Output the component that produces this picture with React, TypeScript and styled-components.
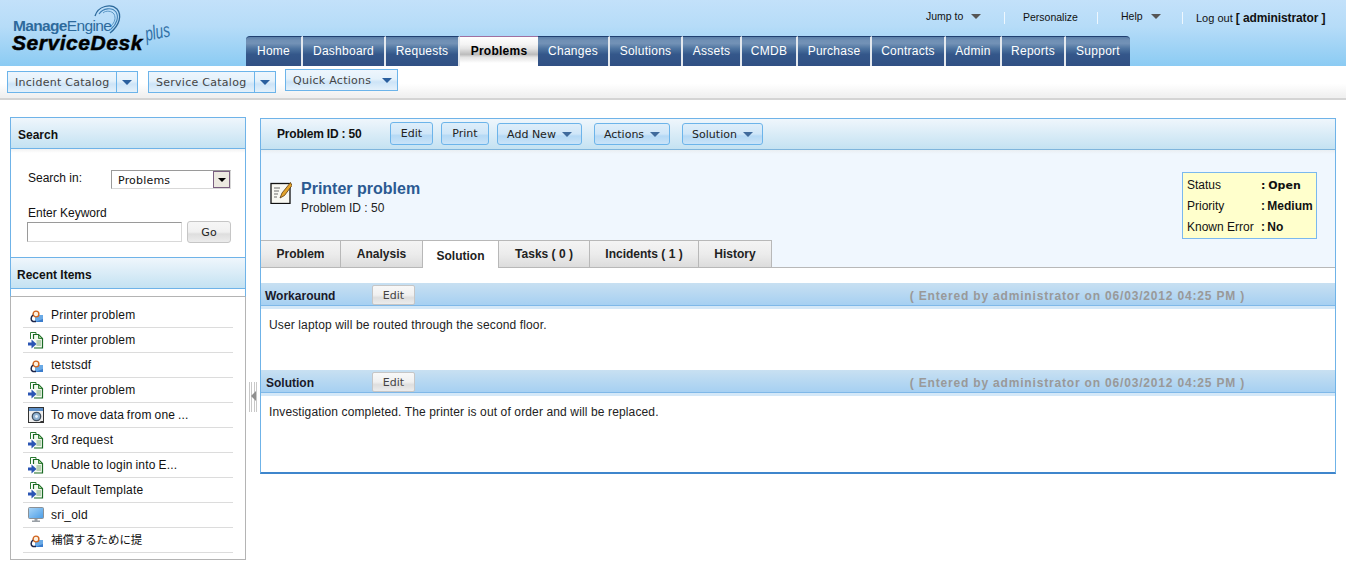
import React from "react";
import styled, { createGlobalStyle } from "styled-components";

const Global = createGlobalStyle`
  html, body { margin: 0; padding: 0; background: #fff; }
  body { font-family: "Liberation Sans", Arial, "Noto Sans CJK JP", sans-serif; font-size: 12px; color: #111; }
  * { box-sizing: border-box; }
`;

const Page = styled.div`
  width: 1346px;
  height: 562px;
  overflow: hidden;
`;

const Header = styled.header`
  height: 66px;
  display: flex;
  background: linear-gradient(#c3e1fa, #b6dcf8 40%, #8bcbf3);
`;

const Logo = styled.div`
  width: 246px;
  flex: none;
  position: relative;
`;

const LogoArc = styled.svg`
  position: absolute;
  left: 90px;
  top: 3px;
`;

const LogoTop = styled.div`
  position: absolute;
  left: 13px;
  top: 18px;
  font-size: 15.5px;
  line-height: 15px;
  letter-spacing: -0.65px;
  color: #2d6a9c;
  font-weight: 700;
  span { font-weight: 400; color: #2d6a9c; }
`;

const LogoMain = styled.div`
  position: absolute;
  left: 12px;
  top: 33px;
  font-size: 21px;
  line-height: 20px;
  font-weight: 700;
  font-style: italic;
  color: #000;
  letter-spacing: 0.55px;
  -webkit-text-stroke: 0.5px #000;
`;

const LogoPlus = styled.div`
  position: absolute;
  left: 147px;
  top: 24px;
  font-style: italic;
  font-size: 20px;
  line-height: 20px;
  color: #2f6fa5;
  transform-origin: left bottom;
  transform: rotate(-11deg) scaleX(0.68);
`;

const HeaderRight = styled.div`
  flex: 1;
  display: flex;
  flex-direction: column;
`;

const TopLinks = styled.div`
  height: 36px;
  padding-top: 9px;
  display: flex;
  align-items: flex-start;
  font-size: 10.5px;
  line-height: 14px;
`;

const TopLink = styled.div<{ $left: number; $w: number; $top?: number }>`
  margin-left: ${(p) => p.$left}px;
  margin-top: ${(p) => p.$top ?? 0}px;
  width: ${(p) => p.$w}px;
  display: flex;
  align-items: center;
  white-space: nowrap;
`;

const TopSep = styled.div<{ $left: number }>`
  margin-left: ${(p) => p.$left}px;
  width: 1px;
  height: 12px;
  margin-top: 3px;
  background: #eef7fe;
`;

const GreyCaret = styled.span`
  margin-left: 8px;
  width: 0;
  height: 0;
  border-left: 5px solid transparent;
  border-right: 5px solid transparent;
  border-top: 5px solid #555;
`;

const Logout = styled.div`
  margin-left: 13px;
  margin-top: 2px;
  font-size: 11px;
  white-space: nowrap;
  b { font-size: 12px; letter-spacing: -0.1px; }
`;

const Nav = styled.nav`
  height: 30px;
  display: flex;
`;

const NavTab = styled.div<{ $w: number; $active?: boolean; $first?: boolean; $last?: boolean }>`
  width: ${(p) => p.$w}px;
  height: 30px;
  flex: none;
  display: flex;
  align-items: center;
  justify-content: center;
  padding-bottom: 2px;
  font-size: 12px;
  letter-spacing: 0.25px;
  color: ${(p) => (p.$active ? "#000" : "#fff")};
  font-weight: ${(p) => (p.$active ? 700 : 400)};
  border-right: ${(p) => (p.$active || p.$last ? "0" : "2px solid #e3e8ee")};
  border-top: 1px solid ${(p) => (p.$active ? "#a070a0" : "#1f3f70")};
  border-radius: ${(p) => (p.$first ? "4px 0 0 0" : p.$last ? "0 4px 0 0" : "0")};
  background: ${(p) =>
    p.$active
      ? "linear-gradient(#fff 0, #f4f4f4 25%, #e4e4e4 40%, #bcbcbc 60%, #e4e4e4 70%, #fff 90%)"
      : "linear-gradient(#5b7fa8 0, #6f8fb4 12%, #7392b6 22%, #4e74a0 40%, #34578a 60%, #315084 100%)"};
`;

const SubBar = styled.div`
  height: 34px;
  display: flex;
  padding-left: 7px;
  background: linear-gradient(#fff 0, #fff 55%, #f0f0f0 95%);
  border-bottom: 2px solid #d4d4d4;
`;

const SplitButton = styled.div<{ $top: number; $ml: number; $main: number }>`
  margin-top: ${(p) => p.$top}px;
  margin-left: ${(p) => p.$ml}px;
  height: 22px;
  display: flex;
  border: 1px solid #6cb4ea;
  background: linear-gradient(#eef6fd, #e4f1fb 45%, #cde4f7 60%, #e4f1fb);
  font-family: "DejaVu Sans", Verdana, sans-serif;
  font-size: 11px;
  letter-spacing: 0.27px;
  color: #444;
  span:first-child {
    width: ${(p) => p.$main}px;
    padding-left: 7px;
    line-height: 22px;
    white-space: nowrap;
  }
`;

const SplitArrow = styled.span<{ $plain?: boolean }>`
  width: 21px;
  display: flex;
  align-items: center;
  justify-content: center;
  border-left: ${(p) => (p.$plain ? "0" : "1px solid #6cb4ea")};
  &::before {
    content: "";
    width: 0;
    height: 0;
    border-left: 5px solid transparent;
    border-right: 5px solid transparent;
    border-top: 5px solid #2a5f9e;
  }
`;

const Content = styled.div`
  display: flex;
  padding: 17px 0 0 10px;
`;

const Sidebar = styled.aside`
  width: 236px;
  height: 443px;
  flex: none;
  display: flex;
  flex-direction: column;
  border: 1px solid #b4b4b4;
  border-top: 0;
`;

const BlueSection = styled.div`
  margin: 0 -1px;
  border: 1px solid #6fb3e8;
  border-bottom: 0;
  flex: none;
`;

const SideHead = styled.div<{ $pl: number }>`
  height: 31px;
  padding: 3px 0 0 ${(p) => p.$pl}px;
  display: flex;
  align-items: center;
  font-weight: 700;
  font-size: 12px;
  background: linear-gradient(#eff6fc, #c4e2f2);
  border-bottom: 1px solid #6fb3e8;
`;

const SearchBody = styled.div`
  height: 109px;
  padding: 20px 14px 0 16px;
  background: linear-gradient(#f2f2f2 0, #fff 4px);
  border-bottom: 1px solid #6fb3e8;
`;

const SearchInRow = styled.div`
  display: flex;
  align-items: flex-start;
  height: 37px;
`;

const SearchLabel = styled.div`
  width: 84px;
  padding: 1px 0 0 1px;
  line-height: 16px;
`;

const FakeSelect = styled.div`
  width: 120px;
  height: 19px;
  margin-top: 1px;
  display: flex;
  align-items: center;
  justify-content: space-between;
  padding-left: 6px;
  border: 1px solid;
  border-color: #9a9a9a #d8d8d8 #d8d8d8 #9a9a9a;
  background: #fff;
  font-family: "DejaVu Sans", Verdana, sans-serif;
  font-size: 11px;
  letter-spacing: 0.2px;
  line-height: 19px;
`;

const SelectName = styled.span`
  padding-top: 1px;
`;

const SelectBtn = styled.div`
  width: 17px;
  height: 17px;
  display: flex;
  align-items: center;
  justify-content: center;
  background: #ece9e0;
  border: 1px solid #7a5f80;
  &::before {
    content: "";
    border-left: 4px solid transparent;
    border-right: 4px solid transparent;
    border-top: 4px solid #000;
  }
`;

const KeywordLabel = styled.div`
  line-height: 15px;
  padding-left: 1px;
`;

const KeywordRow = styled.div`
  display: flex;
  gap: 5px;
`;

const KeywordInput = styled.div`
  width: 155px;
  height: 20px;
  margin-top: 1px;
  background: #fff;
  border: 1px solid;
  border-color: #9a9a9a #d8d8d8 #d8d8d8 #9a9a9a;
`;

const GoButton = styled.div`
  width: 44px;
  height: 22px;
  display: flex;
  align-items: center;
  justify-content: center;
  border: 1px solid #c6c6c6;
  border-radius: 3px;
  background: linear-gradient(#f6f6f6, #f0f0f0 50%, #dedede 60%, #ececec);
  font-family: "DejaVu Sans", Verdana, sans-serif;
  font-size: 11px;
  color: #222;
`;

const RecentGap = styled.div`
  height: 8px;
  margin: 0 -1px;
  border-left: 1px solid #6fb3e8;
  border-right: 1px solid #6fb3e8;
  border-bottom: 1px solid #b4b4b4;
  flex: none;
`;

const RecentList = styled.ul`
  list-style: none;
  margin: 6px 12px 0 12px;
  padding: 0;
`;

const RecentRow = styled.li`
  height: 25px;
  display: flex;
  align-items: center;
  border-bottom: 1px solid #dcdcdc;
  padding-left: 5px;
  font-size: 12px;
  letter-spacing: 0.2px;
  word-spacing: -0.7px;
  white-space: nowrap;
  svg { flex: none; margin-right: 7px; }
`;

const CjkLabel = styled.span`
  font-family: "Noto Sans CJK JP", sans-serif;
  font-size: 11.5px;
  letter-spacing: -0.1px;
  margin-top: -2px;
`;

const Splitter = styled.div`
  width: 14px;
  height: 443px;
  flex: none;
  display: flex;
  align-items: flex-start;
  justify-content: center;
`;

const SplitterGrip = styled.svg`
  margin-top: 265px;
`;

const Main = styled.main`
  width: 1076px;
  height: 356px;
  flex: none;
  margin-top: 1px;
  display: flex;
  flex-direction: column;
  border: 1px solid #6fb3e8;
  border-bottom: 2px solid #3f86cc;
`;

const Toolbar = styled.div`
  height: 31px;
  flex: none;
  display: flex;
  align-items: flex-start;
  background: linear-gradient(#eff6fc, #c4e2f2);
  border-bottom: 1px solid #7fb5dc;
`;

const ToolTitle = styled.div`
  width: 129px;
  padding: 8px 0 0 16px;
  font-weight: 700;
  font-size: 12px;
  letter-spacing: -0.2px;
  line-height: 14px;
  white-space: nowrap;
`;

const ToolButton = styled.div<{ $w: number; $ml: number; $top: number; $h: number }>`
  width: ${(p) => p.$w}px;
  height: ${(p) => p.$h}px;
  margin-left: ${(p) => p.$ml}px;
  margin-top: ${(p) => p.$top}px;
  flex: none;
  display: flex;
  align-items: center;
  justify-content: center;
  gap: 6px;
  border: 1px solid #6cb4ea;
  border-radius: 3px;
  background: linear-gradient(#deeefa, #cfe6f8 50%, #b5d9f5 60%, #c9e3f8);
  font-family: "DejaVu Sans", Verdana, sans-serif;
  font-size: 11px;
  color: #222;
`;

const BlueCaret = styled.span`
  width: 0;
  height: 0;
  border-left: 5px solid transparent;
  border-right: 5px solid transparent;
  border-top: 5px solid #3f6a9c;
`;

const InfoArea = styled.div`
  height: 118px;
  flex: none;
  background: linear-gradient(#e9eef2 0, #f0f7fe 4px);
  border-bottom: 1px solid #b8b8b8;
  display: flex;
  flex-direction: column;
`;

const InfoTop = styled.div`
  height: 90px;
  display: flex;
  justify-content: space-between;
`;

const TitleBlock = styled.div`
  display: flex;
  padding: 30px 0 0 9px;
  svg { flex: none; margin-right: 9px; margin-top: 2px; }
`;

const TitleText = styled.div`
  font-size: 16px;
  font-weight: 700;
  line-height: 18px;
  color: #2b5a92;
`;

const SubText = styled.div`
  font-size: 12px;
  line-height: 14px;
  margin-top: 3px;
  color: #222;
`;

const StatusBox = styled.div`
  width: 135px;
  height: 67px;
  margin: 22px 18px 0 0;
  padding: 2px 0 0 4px;
  background: #ffffcc;
  border: 1px solid #7ab8ee;
`;

const StatusRow = styled.div`
  display: flex;
  height: 21px;
  line-height: 21px;
  font-size: 12px;
  white-space: nowrap;
`;

const StatusKey = styled.div`
  width: 74px;
`;

const StatusValue = styled.div<{ $wide?: boolean }>`
  font-weight: 700;
  word-spacing: -1px;
  font-family: ${(p) => (p.$wide ? '"DejaVu Sans", Verdana, sans-serif' : "inherit")};
  font-size: ${(p) => (p.$wide ? "11px" : "12px")};
`;

const Tabs = styled.div`
  display: flex;
  height: 27px;
`;

const TabItem = styled.div<{ $w: number; $active?: boolean }>`
  width: ${(p) => p.$w}px;
  flex: none;
  height: ${(p) => (p.$active ? "28px" : "27px")};
  display: flex;
  justify-content: center;
  padding-top: ${(p) => (p.$active ? "8px" : "6px")};
  font-weight: 700;
  font-size: 12px;
  line-height: 14px;
  white-space: nowrap;
  color: #222;
  position: relative;
  z-index: ${(p) => (p.$active ? 1 : 0)};
  border-top: 1px solid #b8b8b8;
  border-right: 1px solid #b8b8b8;
  background: ${(p) => (p.$active ? "#fff" : "linear-gradient(#f4f4f4, #ececec 50%, #dcdcdc)")};
`;

const SectionHead = styled.div<{ $pl: number }>`
  height: 26px;
  flex: none;
  display: flex;
  align-items: flex-start;
  padding-left: ${(p) => p.$pl}px;
  background: linear-gradient(#c8e0f2 0, #a6d0f2 22px, #7fb8e8 22px, #7fb8e8 23px, #d4e8f8 23px);
`;

const SectionName = styled.div<{ $w: number }>`
  width: ${(p) => p.$w}px;
  flex: none;
  padding-top: 6px;
  font-weight: 700;
  font-size: 12px;
  line-height: 14px;
  color: #1a1a2a;
`;

const SectionEdit = styled.div`
  width: 43px;
  height: 20px;
  margin-top: 2px;
  flex: none;
  display: flex;
  align-items: center;
  justify-content: center;
  border: 1px solid #c6c6c6;
  border-radius: 2px;
  background: linear-gradient(#f8f8f8, #f0f0f0 50%, #dedede 65%, #ececec);
  font-family: "DejaVu Sans", Verdana, sans-serif;
  font-size: 11px;
  color: #444;
`;

const EnteredBy = styled.div`
  flex: 1;
  text-align: right;
  padding: 6px 90px 0 0;
  font-weight: 700;
  font-size: 12px;
  letter-spacing: 0.82px;
  line-height: 14px;
  color: #999;
  white-space: nowrap;
`;

const SectionBody = styled.div<{ $h: number }>`
  height: ${(p) => p.$h}px;
  flex: none;
  padding: 9px 0 0 8px;
  font-size: 12px;
  letter-spacing: 0.13px;
  line-height: 14px;
  color: #222;
`;

const ProblemIcon = () => (
  <svg width="16" height="16" viewBox="0 0 16 16">
    <rect x="7" y="8" width="8" height="7" fill="#6aaae6" />
    <path d="M7 15 H15 V12 Z" fill="#3a7ccc" />
    <circle cx="8" cy="7" r="2.9" fill="#fdf2e2" stroke="#d0641f" strokeWidth="1.4" />
    <path d="M5 8 C2.5 10 2.5 13.5 5 14.5 L8 14.5" fill="none" stroke="#1b2348" strokeWidth="1.5" />
  </svg>
);

const RequestIcon = () => (
  <svg width="16" height="18" viewBox="0 0 16 18">
    <path d="M2.5 8 V1.5 H8 V3" fill="none" stroke="#2a7a30" strokeWidth="1" />
    <path d="M5.5 8 V3.5 H10.5 L14.5 7.5 V17 H6" fill="#f4faf0" stroke="#1a6a24" strokeWidth="1.2" />
    <path d="M10.5 3.5 V7.5 H14.5 Z" fill="#9fd08f" stroke="#1a6a24" strokeWidth="0.8" />
    <path d="M8.5 10 H13 M8.5 12 H13 M8.5 14 H13" stroke="#7aa874" strokeWidth="1" />
    <path d="M0 11.5 H3.5 V8.5 L8.5 13 L3.5 17.5 V14.5 H0 Z" fill="#2a55b4" />
  </svg>
);

const ChangeIcon = () => (
  <svg width="16" height="16" viewBox="0 0 16 16">
    <rect x="0.5" y="0.5" width="15" height="15" fill="#eeeeee" stroke="#333" />
    <rect x="1" y="1" width="14" height="3" fill="#5c8fc8" />
    <circle cx="8.5" cy="9.5" r="4.2" fill="#8fb2d2" stroke="#3f4f60" strokeWidth="1.3" />
    <circle cx="8.5" cy="9.5" r="1.4" fill="#eaf2fa" />
    <path d="M13 14 L15.5 14 L15.5 15.5 L11 15.5 Z" fill="#333" />
  </svg>
);

const MonitorIcon = () => (
  <svg width="16" height="16" viewBox="0 0 16 16">
    <defs>
      <linearGradient id="screen" x1="0" y1="0" x2="1" y2="1">
        <stop offset="0" stopColor="#a9d6f8" />
        <stop offset="1" stopColor="#4a9ce6" />
      </linearGradient>
    </defs>
    <rect x="0.5" y="0.5" width="15" height="11" rx="1" fill="url(#screen)" stroke="#8a9096" />
    <path d="M6.5 12 H9.5 V13.5 H12 V15 H4 V13.5 H6.5 Z" fill="#9aa0a6" />
  </svg>
);

const NoteIcon = () => (
  <svg width="22" height="22" viewBox="0 0 22 22">
    <rect x="1" y="1.5" width="19" height="20" fill="#f8f8f2" stroke="#111" strokeWidth="1.3" />
    <path d="M4 6 H10 M4 9 H9 M4 12 H8 M4 15 H7" stroke="#6c6c6c" strokeWidth="1" />
    <path d="M20.5 0.5 L12 11 L10 16 L14.5 13.5 L22 3.5 Z" fill="#e3a32a" stroke="#5a3a10" strokeWidth="0.8" />
  </svg>
);

const navItems: [string, number][] = [
  ["Home", 57], ["Dashboard", 83], ["Requests", 74], ["Problems", 78], ["Changes", 72],
  ["Solutions", 73], ["Assets", 59], ["CMDB", 56], ["Purchase", 74], ["Contracts", 74],
  ["Admin", 56], ["Reports", 64], ["Support", 64],
];

const recent: [string, React.FC, boolean?][] = [
  ["Printer problem", ProblemIcon],
  ["Printer problem", RequestIcon],
  ["tetstsdf", ProblemIcon],
  ["Printer problem", RequestIcon],
  ["To move data from one ...", ChangeIcon],
  ["3rd request", RequestIcon],
  ["Unable to login into E...", RequestIcon],
  ["Default Template", RequestIcon],
  ["sri_old", MonitorIcon],
  ["補償するために提", ProblemIcon, true],
];

const tabs: [string, number][] = [
  ["Problem", 80], ["Analysis", 82], ["Solution", 76], ["Tasks ( 0 )", 91],
  ["Incidents ( 1 )", 109], ["History", 73],
];

export default function App() {
  return (
    <Page>
      <Global />
      <Header>
        <Logo>
          <LogoArc width="34" height="32" viewBox="0 0 34 32">
            <path d="M5 13 C8 3 21 0 27 6 C32 12 30 22 20 30" fill="none" stroke="#2d6a9c" strokeWidth="1.3" />
            <path d="M9 11 C13 5 22 4 26 9 C29 14 27 21 21 26" fill="none" stroke="#3f80b5" strokeWidth="1.1" />
            <path d="M13 10 C16 7 22 8 24 11 C26 15 25 19 21 23" fill="none" stroke="#4f8fc0" strokeWidth="0.9" />
          </LogoArc>
          <LogoTop>Manage<span>Engine</span></LogoTop>
          <LogoMain>ServiceDesk</LogoMain>
          <LogoPlus>plus</LogoPlus>
        </Logo>
        <HeaderRight>
          <TopLinks>
            <TopLink $left={680} $w={56}>Jump to<GreyCaret /></TopLink>
            <TopSep $left={22} />
            <TopLink $left={18} $w={56} $top={1}>Personalize</TopLink>
            <TopSep $left={18} />
            <TopLink $left={23} $w={40}>Help<GreyCaret /></TopLink>
            <TopSep $left={21} />
            <Logout>Log out <b>[ administrator ]</b></Logout>
          </TopLinks>
          <Nav>
            {navItems.map(([label, w], i) => (
              <NavTab key={label} $w={w} $active={label === "Problems"} $first={i === 0} $last={i === navItems.length - 1}>
                {label}
              </NavTab>
            ))}
          </Nav>
        </HeaderRight>
      </Header>
      <SubBar>
        <SplitButton $top={5} $ml={0} $main={108}>
          <span>Incident Catalog</span>
          <SplitArrow />
        </SplitButton>
        <SplitButton $top={5} $ml={10} $main={105}>
          <span>Service Catalog</span>
          <SplitArrow />
        </SplitButton>
        <SplitButton $top={3} $ml={9} $main={90}>
          <span>Quick Actions</span>
          <SplitArrow $plain />
        </SplitButton>
      </SubBar>
      <Content>
        <Sidebar>
          <BlueSection>
            <SideHead $pl={7}>Search</SideHead>
            <SearchBody>
              <SearchInRow>
                <SearchLabel>Search in:</SearchLabel>
                <FakeSelect><SelectName>Problems</SelectName><SelectBtn /></FakeSelect>
              </SearchInRow>
              <KeywordLabel>Enter Keyword</KeywordLabel>
              <KeywordRow>
                <KeywordInput />
                <GoButton>Go</GoButton>
              </KeywordRow>
            </SearchBody>
            <SideHead $pl={6}>Recent Items</SideHead>
          </BlueSection>
          <RecentGap />
          <RecentList>
            {recent.map(([label, Icon, cjk], i) => (
              <RecentRow key={i}>
                <Icon />
                {cjk ? <CjkLabel>{label}</CjkLabel> : label}
              </RecentRow>
            ))}
          </RecentList>
        </Sidebar>
        <Splitter>
          <SplitterGrip width="8" height="30" viewBox="0 0 8 30">
            <path d="M0.5 0 V30 M2.5 0 V30 M5.5 0 V30 M7.5 0 V30" stroke="#c8c8c8" strokeWidth="1" />
            <path d="M7 9 L2 14 L7 19 Z" fill="#8f8f8f" />
          </SplitterGrip>
        </Splitter>
        <Main>
          <Toolbar>
            <ToolTitle>Problem ID : 50</ToolTitle>
            <ToolButton $w={43} $ml={0} $top={3} $h={23}>Edit</ToolButton>
            <ToolButton $w={48} $ml={8} $top={3} $h={23}>Print</ToolButton>
            <ToolButton $w={85} $ml={8} $top={4} $h={22}>Add New<BlueCaret /></ToolButton>
            <ToolButton $w={76} $ml={12} $top={4} $h={22}>Actions<BlueCaret /></ToolButton>
            <ToolButton $w={81} $ml={12} $top={4} $h={22}>Solution<BlueCaret /></ToolButton>
          </Toolbar>
          <InfoArea>
            <InfoTop>
              <TitleBlock>
                <NoteIcon />
                <div>
                  <TitleText>Printer problem</TitleText>
                  <SubText>Problem ID : 50</SubText>
                </div>
              </TitleBlock>
              <StatusBox>
                <StatusRow><StatusKey>Status</StatusKey><StatusValue $wide>: Open</StatusValue></StatusRow>
                <StatusRow><StatusKey>Priority</StatusKey><StatusValue>: Medium</StatusValue></StatusRow>
                <StatusRow><StatusKey>Known Error</StatusKey><StatusValue>: No</StatusValue></StatusRow>
              </StatusBox>
            </InfoTop>
            <Tabs>
              {tabs.map(([label, w]) => (
                <TabItem key={label} $w={w} $active={label === "Solution"}>{label}</TabItem>
              ))}
            </Tabs>
          </InfoArea>
          <SectionBody $h={15} />
          <SectionHead $pl={4}>
            <SectionName $w={107}>Workaround</SectionName>
            <SectionEdit>Edit</SectionEdit>
            <EnteredBy>( Entered by administrator on 06/03/2012 04:25 PM )</EnteredBy>
          </SectionHead>
          <SectionBody $h={61}>User laptop will be routed through the second floor.</SectionBody>
          <SectionHead $pl={5}>
            <SectionName $w={106}>Solution</SectionName>
            <SectionEdit>Edit</SectionEdit>
            <EnteredBy>( Entered by administrator on 06/03/2012 04:25 PM )</EnteredBy>
          </SectionHead>
          <SectionBody $h={76}>Investigation completed. The printer is out of order and will be replaced.</SectionBody>
        </Main>
      </Content>
    </Page>
  );
}
